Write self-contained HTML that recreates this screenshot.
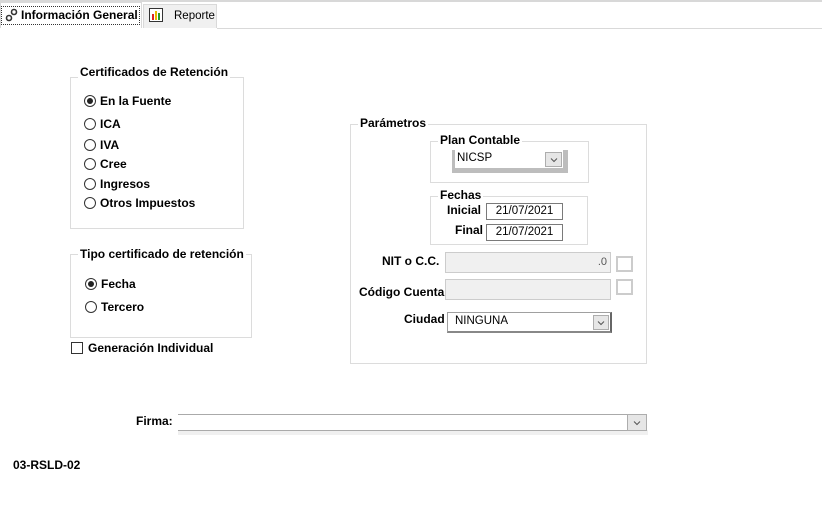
<!DOCTYPE html>
<html><head><meta charset="utf-8"><style>
body{margin:0;width:822px;height:527px;background:#fff;position:relative;overflow:hidden;font-family:"Liberation Sans",Arial,sans-serif;font-size:11px;color:#000}
.a{position:absolute}
.b{font-weight:bold}
.g{position:absolute;border:1px solid #dcdcdc}
.t{position:absolute;background:#fff;padding:0 2px;font-weight:bold;line-height:13px;font-size:12px}
.r{position:absolute;width:12px;height:12px;border:1px solid #333;border-radius:50%;background:#fff;box-sizing:border-box}
.r.on::after{content:"";position:absolute;left:2px;top:2px;width:6px;height:6px;border-radius:50%;background:#222}
.lbl{position:absolute;font-weight:bold;line-height:13px;font-size:12px}
.box{position:absolute;border:1px solid #7a7a7a;background:#fff;box-sizing:border-box;text-align:center;line-height:15px;font-size:11.5px}
.btn{position:absolute;background:#e6e6e6;border:1px solid #adadad;box-sizing:border-box}
.btn svg{position:absolute;left:50%;top:50%;margin:-3px 0 0 -4px}
</style></head><body>
<div class="a" style="left:0;top:0;width:822px;height:2px;background:#d8d8d8"></div>
<div class="a" style="left:143px;top:4px;width:74px;height:24px;background:#f0f0f0;border:1px solid #d9d9d9;border-bottom:none;box-sizing:border-box"></div>
<div class="a" style="left:217px;top:28px;width:605px;height:1px;background:#d9d9d9"></div>
<div class="a" style="left:0;top:2px;width:142px;height:26px;border:1px solid #d9d9d9;border-bottom:none;box-sizing:border-box;background:#fff"></div>
<div class="a" style="left:1px;top:6px;width:139px;height:19px;border:1px dotted #333;box-sizing:border-box"></div>
<svg class="a" style="left:5px;top:8px" width="14" height="14"><circle cx="9" cy="4" r="2.5" fill="none" stroke="#333" stroke-width="1.6"/><circle cx="4" cy="10" r="2.5" fill="none" stroke="#333" stroke-width="1.6"/></svg>
<div class="a b" style="left:21px;top:8px;font-size:12px">Información General</div>
<svg class="a" style="left:149px;top:8px" width="14" height="14"><rect x="0.5" y="0.5" width="13" height="13" fill="#fff" stroke="#333"/><rect x="3" y="6" width="2" height="6" fill="#d22"/><rect x="6" y="3" width="2" height="9" fill="#e8b800"/><rect x="9" y="5" width="2" height="7" fill="#2a9a2a"/></svg>
<div class="a" style="left:174px;top:10px;font-size:11.5px">Reporte</div>

<div class="g" style="left:70px;top:77px;width:172px;height:150px"></div>
<div class="t" style="left:78px;top:66px">Certificados de Retención</div>
<div class="r on" style="left:84px;top:95px"></div><div class="lbl" style="left:100px;top:95px">En la Fuente</div>
<div class="r" style="left:84px;top:118px"></div><div class="lbl" style="left:100px;top:118px">ICA</div>
<div class="r" style="left:84px;top:139px"></div><div class="lbl" style="left:100px;top:139px">IVA</div>
<div class="r" style="left:84px;top:158px"></div><div class="lbl" style="left:100px;top:158px">Cree</div>
<div class="r" style="left:84px;top:178px"></div><div class="lbl" style="left:100px;top:178px">Ingresos</div>
<div class="r" style="left:84px;top:197px"></div><div class="lbl" style="left:100px;top:197px">Otros Impuestos</div>

<div class="g" style="left:70px;top:254px;width:180px;height:82px"></div>
<div class="t" style="left:78px;top:248px">Tipo certificado de retención</div>
<div class="r on" style="left:85px;top:278px"></div><div class="lbl" style="left:101px;top:278px">Fecha</div>
<div class="r" style="left:85px;top:301px"></div><div class="lbl" style="left:101px;top:301px">Tercero</div>
<div class="a" style="left:71px;top:342px;width:12px;height:12px;border:1px solid #333;box-sizing:border-box"></div>
<div class="lbl" style="left:88px;top:342px">Generación Individual</div>

<div class="g" style="left:350px;top:124px;width:295px;height:238px"></div>
<div class="t" style="left:358px;top:117px">Parámetros</div>
<div class="g" style="left:430px;top:141px;width:157px;height:40px"></div>
<div class="t" style="left:438px;top:134px">Plan Contable</div>
<div class="a" style="left:452px;top:150px;width:116px;height:23px;background:#bdbdbd"></div>
<div class="a" style="left:455px;top:150px;width:108px;height:18px;background:#fff"></div>
<div class="a" style="left:457px;top:152px;font-size:11.5px">NICSP</div>
<div class="btn" style="left:545px;top:152px;width:17px;height:15px"><svg width="8" height="6"><path d="M1 1.5L4 4.5L7 1.5" fill="none" stroke="#555"/></svg></div>

<div class="g" style="left:430px;top:196px;width:156px;height:47px"></div>
<div class="t" style="left:438px;top:189px">Fechas</div>
<div class="lbl" style="left:447px;top:204px">Inicial</div>
<div class="box" style="left:486px;top:203px;width:77px;height:17px">21/07/2021</div>
<div class="lbl" style="left:455px;top:224px">Final</div>
<div class="box" style="left:486px;top:224px;width:77px;height:17px">21/07/2021</div>

<div class="lbl" style="left:382px;top:255px">NIT o C.C.</div>
<div class="a" style="left:445px;top:252px;width:166px;height:21px;background:#f0f0f0;border:1px solid #ccc;box-sizing:border-box;text-align:right;padding-right:3px;line-height:19px;color:#555">.0</div>
<div class="a" style="left:616px;top:256px;width:17px;height:16px;border:2px solid #ccc;box-sizing:border-box"></div>
<div class="lbl" style="left:359px;top:286px">Código Cuenta</div>
<div class="a" style="left:445px;top:279px;width:166px;height:21px;background:#f0f0f0;border:1px solid #ccc;box-sizing:border-box"></div>
<div class="a" style="left:616px;top:279px;width:17px;height:16px;border:2px solid #ccc;box-sizing:border-box"></div>
<div class="lbl" style="left:404px;top:313px">Ciudad</div>
<div class="a" style="left:447px;top:312px;width:165px;height:21px;border:1px solid #a0a0a0;border-right:2px solid #666;border-bottom:2px solid #888;box-sizing:border-box;background:#fff"></div>
<div class="a" style="left:455px;top:315px;font-size:11.5px">NINGUNA</div>
<div class="btn" style="left:593px;top:315px;width:16px;height:15px"><svg width="8" height="6"><path d="M1 1.5L4 4.5L7 1.5" fill="none" stroke="#555"/></svg></div>

<div class="lbl" style="left:136px;top:415px">Firma:</div>
<div class="a" style="left:178px;top:430px;width:470px;height:5px;background:#f0f0f0"></div>
<div class="a" style="left:178px;top:414px;width:469px;height:17px;border-top:1px solid #aaa;border-bottom:1px solid #aaa;box-sizing:border-box;background:#fff"></div>
<div class="btn" style="left:627px;top:414px;width:20px;height:17px"><svg width="8" height="6"><path d="M1 1.5L4 4.5L7 1.5" fill="none" stroke="#555"/></svg></div>

<div class="lbl" style="left:13px;top:459px">03-RSLD-02</div>
</body></html>
